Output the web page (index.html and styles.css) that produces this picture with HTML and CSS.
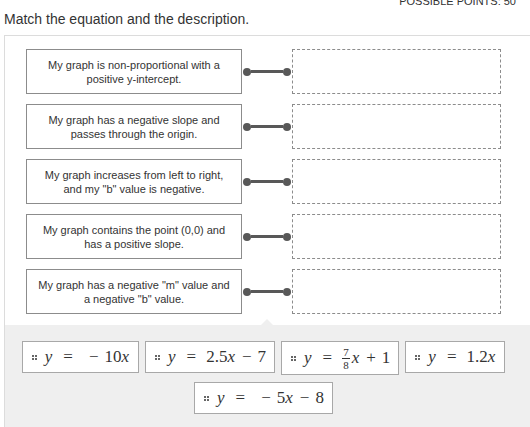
FILE: index.html
```html
<!DOCTYPE html>
<html>
<head>
<meta charset="utf-8">
<link rel="stylesheet" href="styles.css">
</head>
<body>
<div class="points">POSSIBLE POINTS: 50</div>
<h1 class="prompt">Match the equation and the description.</h1>
<div class="match">
  <div class="pairs">
    <div class="pair">
      <div class="desc">My graph is non-proportional with a<br>positive y-intercept.</div>
      <div class="link"><span class="dot"></span><span class="bar"></span><span class="dot"></span></div>
      <div class="slot"></div>
    </div>
    <div class="pair">
      <div class="desc">My graph has a negative slope and<br>passes through the origin.</div>
      <div class="link"><span class="dot"></span><span class="bar"></span><span class="dot"></span></div>
      <div class="slot"></div>
    </div>
    <div class="pair">
      <div class="desc">My graph increases from left to right,<br>and my "b" value is negative.</div>
      <div class="link"><span class="dot"></span><span class="bar"></span><span class="dot"></span></div>
      <div class="slot"></div>
    </div>
    <div class="pair">
      <div class="desc">My graph contains the point (0,0) and<br>has a positive slope.</div>
      <div class="link"><span class="dot"></span><span class="bar"></span><span class="dot"></span></div>
      <div class="slot"></div>
    </div>
    <div class="pair">
      <div class="desc">My graph has a negative "m" value and<br>a negative "b" value.</div>
      <div class="link"><span class="dot"></span><span class="bar"></span><span class="dot"></span></div>
      <div class="slot"></div>
    </div>
  </div>
  <div class="bank">
    <div class="tiles">
      <div class="tile">
        <svg class="grip" width="5" height="5" viewBox="0 0 5 5"><circle cx="1" cy="1" r="1"/><circle cx="4" cy="1" r="1"/><circle cx="1" cy="4" r="1"/><circle cx="4" cy="4" r="1"/></svg>
        <span class="math"><i>y</i><span class="rel">=</span><span class="bin">−</span>10<i>x</i></span>
      </div>
      <div class="tile">
        <svg class="grip" width="5" height="5" viewBox="0 0 5 5"><circle cx="1" cy="1" r="1"/><circle cx="4" cy="1" r="1"/><circle cx="1" cy="4" r="1"/><circle cx="4" cy="4" r="1"/></svg>
        <span class="math"><i>y</i><span class="rel">=</span>2.5<i>x</i><span class="bin">−</span>7</span>
      </div>
      <div class="tile tall">
        <svg class="grip" width="5" height="5" viewBox="0 0 5 5"><circle cx="1" cy="1" r="1"/><circle cx="4" cy="1" r="1"/><circle cx="1" cy="4" r="1"/><circle cx="4" cy="4" r="1"/></svg>
        <span class="math"><i>y</i><span class="rel">=</span><span class="frac"><span class="num">7</span><span class="den">8</span></span><i>x</i><span class="bin">+</span>1</span>
      </div>
      <div class="tile">
        <svg class="grip" width="5" height="5" viewBox="0 0 5 5"><circle cx="1" cy="1" r="1"/><circle cx="4" cy="1" r="1"/><circle cx="1" cy="4" r="1"/><circle cx="4" cy="4" r="1"/></svg>
        <span class="math"><i>y</i><span class="rel">=</span>1.2<i>x</i></span>
      </div>
      <div class="tile">
        <svg class="grip" width="5" height="5" viewBox="0 0 5 5"><circle cx="1" cy="1" r="1"/><circle cx="4" cy="1" r="1"/><circle cx="1" cy="4" r="1"/><circle cx="4" cy="4" r="1"/></svg>
        <span class="math"><i>y</i><span class="rel">=</span><span class="bin">−</span>5<i>x</i><span class="bin">−</span>8</span>
      </div>
    </div>
  </div>
</div>
</body>
</html>
```
FILE: styles.css
```css
html, body {
  margin: 0;
  padding: 0;
  overflow: hidden;
  background: #fff;
  font-family: "Liberation Sans", Arial, sans-serif;
  color: #333;
}

.points {
  margin-top: -4px;
  height: 11px;
  line-height: 11px;
  padding-right: 14px;
  text-align: right;
  font-size: 11px;
  color: #333;
}

.prompt {
  margin: 4px 0 0 4px;
  height: 17px;
  line-height: 17px;
  font-size: 14px;
  font-weight: normal;
  color: #333;
}

.match {
  margin: 7px 0 0 4px;
  width: 560px;
  border: 1px solid #dcdcdc;
  background: #fff;
}

.pairs {
  display: flex;
  flex-direction: column;
  gap: 10px;
  padding: 13px 0 11px 21px;
}

.pair {
  display: flex;
  height: 45px;
}

.desc {
  box-sizing: border-box;
  width: 216px;
  height: 45px;
  border: 1px solid #8c8c8c;
  display: flex;
  align-items: center;
  justify-content: center;
  text-align: center;
  padding: 0 6px;
  font-size: 11px;
  line-height: 14px;
  white-space: nowrap;
  color: #333;
}

.link {
  width: 50px;
  display: flex;
  align-items: center;
  padding-left: 1px;
  box-sizing: border-box;
}

.dot {
  width: 8px;
  height: 8px;
  border-radius: 50%;
  background: #585858;
  flex: none;
}

.bar {
  width: 32px;
  height: 3px;
  background: #585858;
  flex: none;
}

.slot {
  box-sizing: border-box;
  width: 209px;
  height: 45px;
  border: 1px dashed #8c8c8c;
}

.bank {
  position: relative;
  background: #efefef;
  padding: 16px 0 20px;
}

.bank::before {
  content: "";
  position: absolute;
  top: -6px;
  left: 256px;
  border-left: 6px solid transparent;
  border-right: 6px solid transparent;
  border-bottom: 6px solid #efefef;
}

.tiles {
  width: 491px;
  margin-left: 13px;
  display: flex;
  flex-wrap: wrap;
  justify-content: center;
  align-items: flex-start;
  gap: 7px 6px;
}

.tile {
  box-sizing: border-box;
  height: 32px;
  border: 1px solid #a8a8a8;
  background: #fff;
  display: flex;
  align-items: center;
  padding: 0 8px 0 9px;
}

.tile.tall {
  height: 34px;
}

.grip {
  fill: #333;
  margin-right: 8px;
  flex: none;
}

.math {
  font-family: "Liberation Serif", "Times New Roman", serif;
  font-size: 17px;
  color: #333;
  white-space: nowrap;
  display: flex;
  align-items: center;
}

.math i {
  font-style: italic;
  padding-right: 1px;
}

.rel {
  margin: 0 10px;
}

.bin {
  margin: 0 6px;
}

.frac {
  display: inline-flex;
  flex-direction: column;
  align-items: center;
  font-size: 11px;
  line-height: 10px;
  margin-right: 2px;
}

.num {
  border-bottom: 1px solid #333;
  padding: 0 1px 1px;
}

.den {
  padding-top: 1px;
}
```
